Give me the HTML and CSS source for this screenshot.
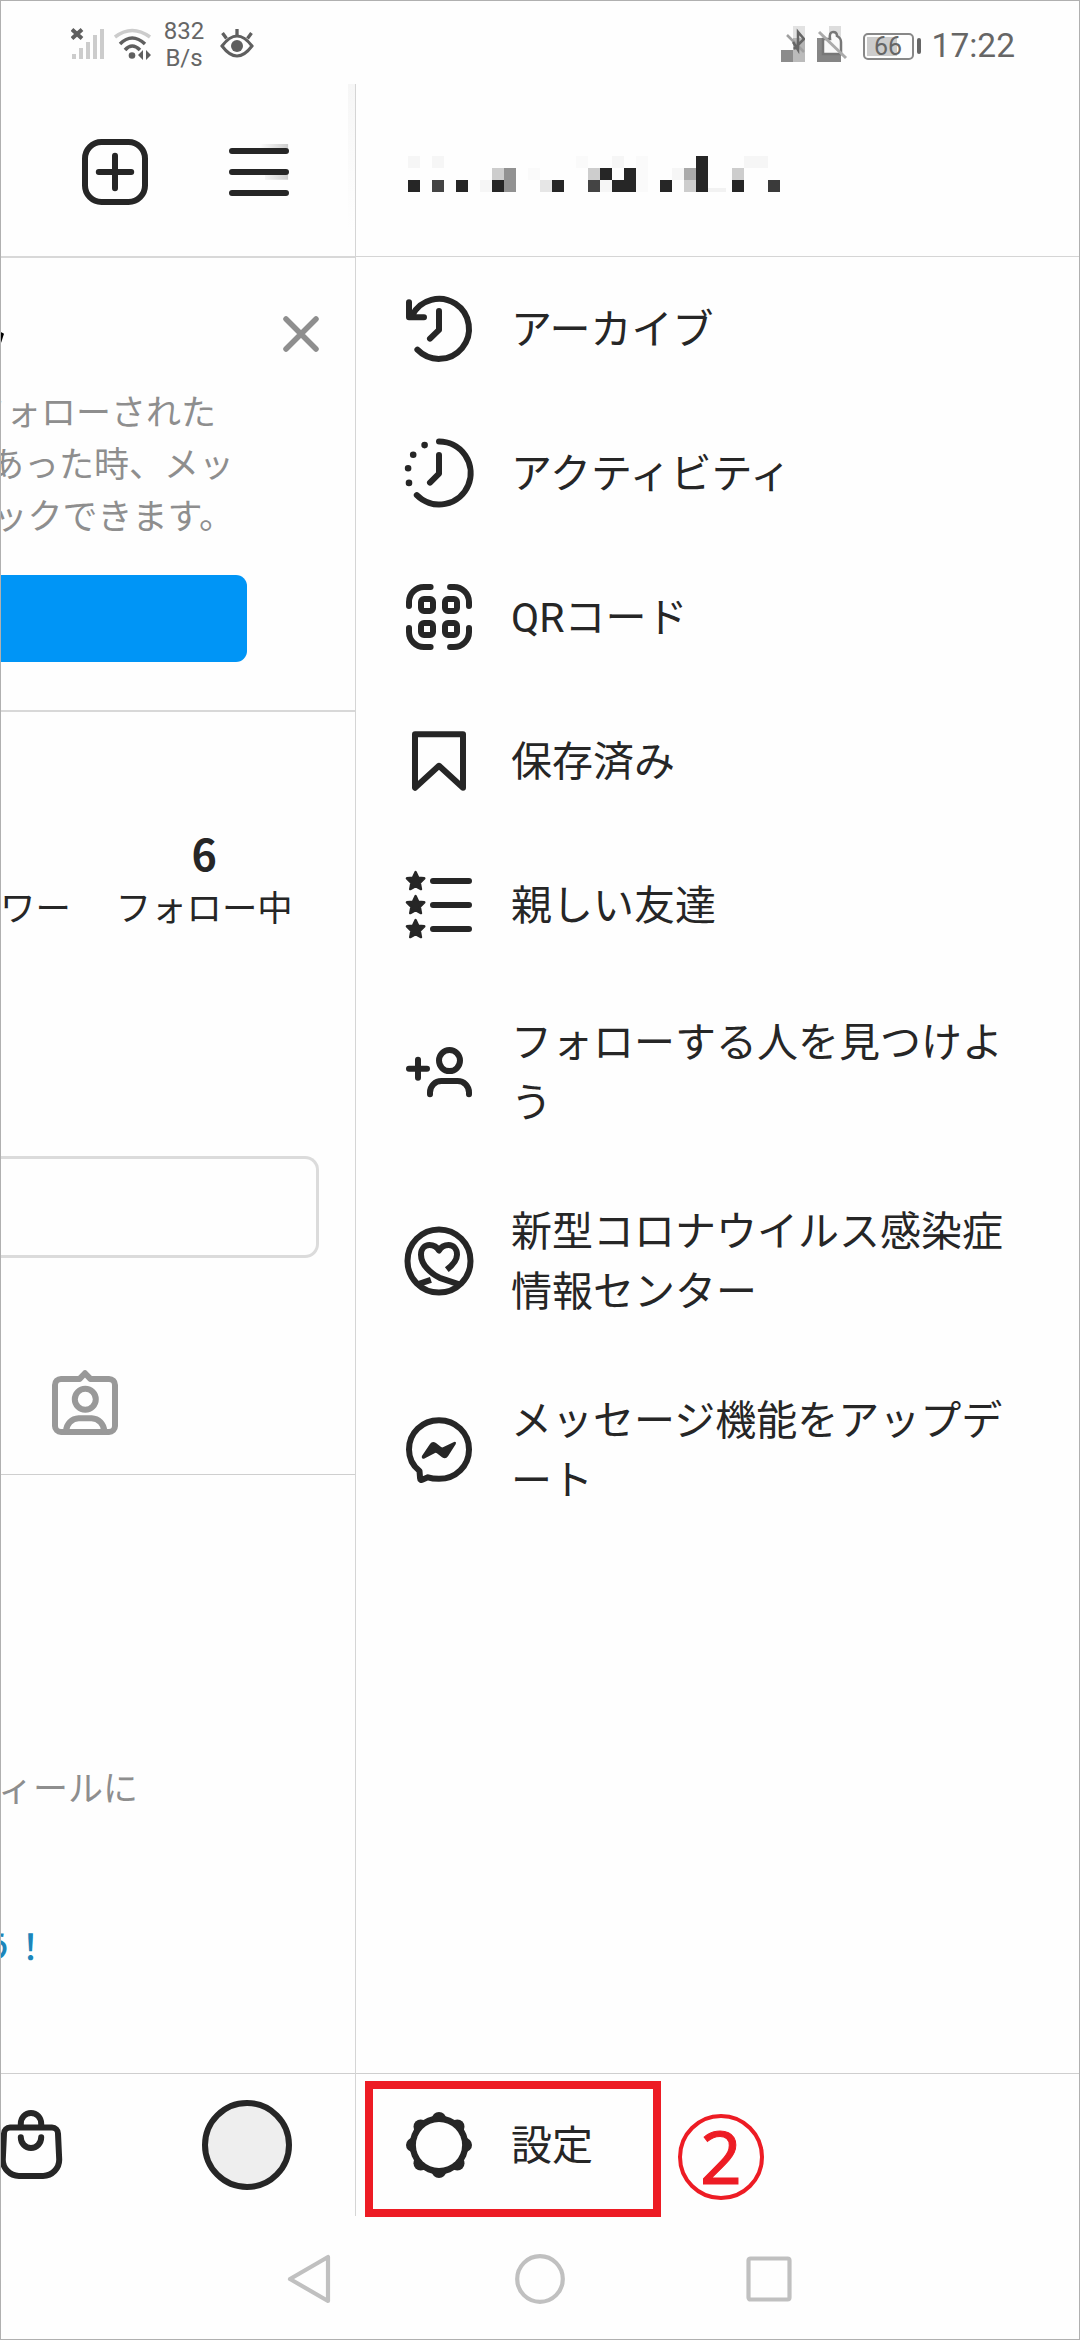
FILE: index.html
```html
<!DOCTYPE html>
<html lang="ja">
<head>
    <meta charset="UTF-8">
    <meta name="viewport" content="width=device-width, initial-scale=1.0">
    <title>メニュー</title>
    <link rel="stylesheet" href="styles.css">
</head>
<body>
<div class="screen">

    <!-- ステータスバー -->
    <div class="status">
        <svg class="signal" viewBox="0 0 34 32" width="34" height="32">
            <path d="M3 26v5M10 20v11M17 14v17M24 7v24M31 1v30" stroke="#ccc" stroke-width="4" fill="none"/>
            <path d="M1 1.500l10 9M11 1.500l-10 9" stroke="#5f5f5f" stroke-width="4" fill="none"/>
        </svg>
        <svg class="wifi" viewBox="0 0 38 32" width="38" height="32">
            <g fill="none" stroke-width="3.5">
                <path d="M1 9Q18 -4 36 9" stroke="#ccc"/>
                <path d="M6 16Q18 4 31 16M11 22Q18 14 26 22" stroke="#5f5f5f"/>
            </g>
            <circle cx="18" cy="27.500" r="3.300" fill="#5f5f5f"/>
            <path d="M29 22v10l-5-5zM32 22v10l5-5z" fill="#5f5f5f"/>
        </svg>
        <div class="speed">832<br>B/s</div>
        <svg class="eye" viewBox="0 0 34 32" width="34" height="32">
            <path d="M2 18Q17 -2 32 18Q17 38 2 18z" fill="none" stroke="#5f5f5f" stroke-width="3"/>
            <circle cx="17" cy="18" r="6" fill="#5f5f5f"/>
            <path d="M17 1v7M2.500 5l4 5.500M31.500 5l-4 5.500" stroke="#5f5f5f" stroke-width="3.300"/>
        </svg>
        <div class="status-right">
            <svg viewBox="0 0 24 36" width="24" height="36">
                <path d="M12 0h12v12H12z" fill="#e2e2e2"/>
                <path d="M12 12h12v12H12z" fill="#b5b5b5"/>
                <path d="M0 24h12v12H0z" fill="#8c8c8c"/>
                <path d="M12 24h12v12H12z" fill="#bbb"/>
                <path d="M6 9l17 17" stroke="#a0a0a0" stroke-width="2.500"/>
                <path d="M13 23l10-10-6-7v18l-5-8" fill="none" stroke="#666" stroke-width="2.500"/>
            </svg>
            <svg class="bell" viewBox="0 0 32 36" width="32" height="36">
                <path d="M0 12h7v24H0z" fill="#8a8a8a"/>
                <path d="M12 0h12v12H12z" fill="#ddd"/>
                <path d="M0 24h24v12H0z" fill="#858585"/>
                <path d="M6 28V13h7q-1-7 3-7 4 0 4 4 4 2 4 6v12z" fill="#fafafa" stroke="#777" stroke-width="2.500"/>
                <path d="M2 6l27 26" stroke="#aaa" stroke-width="3"/>
            </svg>
            <div class="battery"><span>66</span></div>
            <div class="clock">17:22</div>
        </div>
    </div>

    <div class="main">

        <!-- 左にずれたプロフィール画面 -->
        <div class="profile">
            <div class="topbar">
                <svg class="icon" viewBox="0 0 24 24">
                    <rect x="2" y="2" width="20" height="20" rx="5.500"/>
                    <path d="M12 6.600v10.800M6.600 12h10.800"/>
                </svg>
                <svg class="icon" viewBox="0 0 24 24">
                    <defs>
                        <linearGradient id="fade">
                            <stop offset="0" stop-color="#fff"/>
                            <stop offset="1" stop-color="#ccc"/>
                        </linearGradient>
                    </defs>
                    <path class="nostroke" d="M12 2.700h9.700v2.300H12zM14 12h7.700v2.600H14z" fill="url(#fade)"/>
                    <path d="M3 5h18M3 12h18M3 19h18"/>
                </svg>
            </div>

            <div class="banner">
                <div class="banner-title">
                    <i class="title-end"></i>
                    <svg class="close" viewBox="0 0 36 36" width="36" height="36">
                        <path d="M3 3l30 30M33 3L3 33"/>
                    </svg>
                </div>
                <div class="banner-text">
                    <p class="short">フォローされた</p>
                    <p>あった時、メッ</p>
                    <p>ックできます。</p>
                </div>
                <div class="banner-btn"></div>
            </div>

            <div class="stats">
                <div class="stat"><b>&nbsp;</b><span>ワー</span></div>
                <div class="stat"><b>6</b><span>フォロー中</span></div>
            </div>
            <div class="edit-btn"></div>

            <div class="tabs">
                <svg class="icon gray" viewBox="0 0 24 24">
                    <path d="M10.200 4.300H4a2 2 0 0 0-2 2V20a2 2 0 0 0 2 2h16a2 2 0 0 0 2-2V6.300a2 2 0 0 0-2-2h-6.200L12 2.400z"/>
                    <circle cx="12.100" cy="11.100" r="3.500"/>
                    <path d="M5.700 21.700a4.400 4.400 0 0 1 4.200-4.300h4.300a4.400 4.400 0 0 1 4.200 4.300"/>
                </svg>
            </div>

            <div class="feed">
                <p>ィールに</p>
                <p class="link">う！</p>
            </div>

            <div class="tabbar">
                <svg class="icon" viewBox="0 0 24 24">
                    <path d="M5 6.200h14a2 2 0 0 1 2 2l.4 8.500a5.400 5.400 0 0 1-5.400 5.600H8a5.400 5.400 0 0 1-5.400-5.600L3 8.200a2 2 0 0 1 2-2z"/>
                    <path d="M8.600 6V4.900a3.400 3.600 0 0 1 6.800 0V6M8.600 9.400a3.400 3.600 0 0 0 6.800 0"/>
                </svg>
                <div class="avatar"></div>
            </div>
        </div>

        <!-- ドロワーメニュー -->
        <div class="drawer">
            <div class="drawer-head">
                <!-- モザイクのユーザー名 -->
                <svg class="username" viewBox="0 0 372 36" width="372" height="36">
                    <path fill="#f6f6f6" d="M0 0h12v12H0zM24 0h12v12H24zM204 0h12v12h-12zM336 0h24v12h-24zM72 24h12v12H72zM192 24h12v12h-12zM264 12h12v12h-12z"/>
                    <path fill="#fafafa" d="M168 0h12v12h-12zM228 0h12v36h-12zM120 12h12v12h-12z"/>
                    <path fill="#e6e6e6" d="M132 24h12v12h-12z"/>
                    <path fill="#f2f2f2" d="M300 32h18v4h-18z"/>
                    <path fill="#cdcdcd" d="M84 12h12v12H84zM180 12h12v12h-12zM324 12h12v12h-12zM276 24h12v12h-12z"/>
                    <path fill="#aaa" d="M276 12h12v12h-12z"/>
                    <path fill="#929292" d="M96 12h12v24H96z"/>
                    <rect x="24" y="24" width="12" height="12" fill="#444"/>
                    <rect x="180" y="24" width="12" height="12" fill="#444"/>
                    <rect x="360" y="24" width="12" height="12" fill="#3a3a3a"/>
                    <g fill="#262626">
                        <rect x="0" y="24" width="12" height="12"/>
                        <rect x="48" y="24" width="12" height="12"/>
                        <rect x="84" y="24" width="12" height="12"/>
                        <rect x="144" y="24" width="12" height="12"/>
                        <rect x="192" y="12" width="12" height="12"/>
                        <rect x="204" y="24" width="12" height="12"/>
                        <rect x="216" y="12" width="12" height="24"/>
                        <rect x="252" y="24" width="12" height="12"/>
                        <rect x="288" y="0" width="12" height="36"/>
                        <rect x="324" y="24" width="12" height="12"/>
                    </g>
                </svg>
            </div>

            <ul class="menu">
                <li>
                    <svg class="icon" viewBox="0 0 24 24">
                        <path d="M4.800 18.900A10 10 0 1 0 3.100 7.400M2 3.100v5h5M12 6v6.300L9 15.200"/>
                    </svg>
                    <span>アーカイブ</span>
                </li>
                <li>
                    <svg class="icon" viewBox="0 0 24 24">
                        <path d="M12 1.500A10.500 10.500 0 1 1 4.600 19.400M12 6v6.200L9 15.200"/>
                        <path class="fill" d="M6.100 2.700a1.100 1.100 0 1 0 2.200 0a1.100 1.100 0 1 0-2.200 0M2.300 5.900a1.100 1.100 0 1 0 2.200 0a1.100 1.100 0 1 0-2.200 0M.6 10.400a1.100 1.100 0 1 0 2.200 0a1.100 1.100 0 1 0-2.200 0M.9 15.300a1.100 1.100 0 1 0 2.200 0a1.100 1.100 0 1 0-2.200 0"/>
                    </svg>
                    <span>アクティビティ</span>
                </li>
                <li>
                    <svg class="icon" viewBox="0 0 24 24">
                        <path d="M9.200 2H7a5 5 0 0 0-5 5v1.300M15.700 2H17a5 5 0 0 1 5 5v1.300M2 15.700V17a5 5 0 0 0 5 5h2.200M22 15.700V17a5 5 0 0 1-5 5h-1.300"/>
                        <rect x="6" y="6" width="4" height="4" rx="1"/>
                        <rect x="14" y="6" width="4" height="4" rx="1"/>
                        <rect x="6" y="14" width="4" height="4" rx="1"/>
                        <rect x="14" y="14" width="4" height="4" rx="1"/>
                    </svg>
                    <span>QRコード</span>
                </li>
                <li>
                    <svg class="icon" viewBox="0 0 24 24">
                        <path d="M20 20.900l-8-7.300-8 7.300V3.100h16z"/>
                    </svg>
                    <span>保存済み</span>
                </li>
                <li>
                    <svg class="icon" viewBox="0 0 24 24">
                        <path d="M10 4h12M10 12h12M10 20h12"/>
                        <g class="star">
                            <path d="M4.200 1l.9 1.900 2 .2-1.500 1.500.4 2.100-1.800-1-1.800 1 .4-2.100-1.500-1.500 2-.2z"/>
                            <path d="M4.200 9l.9 1.900 2 .2-1.500 1.500.4 2.100-1.800-1-1.800 1 .4-2.100-1.500-1.500 2-.2z"/>
                            <path d="M4.200 17l.9 1.900 2 .2-1.500 1.500.4 2.100-1.800-1-1.800 1 .4-2.100-1.500-1.500 2-.2z"/>
                        </g>
                    </svg>
                    <span>親しい友達</span>
                </li>
                <li class="two">
                    <svg class="icon" viewBox="0 0 24 24">
                        <circle cx="15.500" cy="8.200" r="3.500"/>
                        <path d="M2 10.900h6M5 7.900v6M9 19.400v-.6A3.800 3.800 0 0 1 12.800 15h5.400a3.800 3.800 0 0 1 3.800 3.800v.6"/>
                    </svg>
                    <span>フォローする人を見つけよう</span>
                </li>
                <li class="two">
                    <svg class="icon" viewBox="0 0 24 24">
                        <circle cx="12" cy="12" r="10.500"/>
                        <path class="butt" d="M14.600 14.900C17 13 18 11.500 18 9.900C18 8 16.800 6.700 15.200 6.700C13.800 6.700 12.700 7.300 12 8.500C11.300 7.300 10.200 6.700 8.800 6.700C7.200 6.700 6 8 6 9.900C6 13.300 9.400 16.300 12.200 17.600L19 19.900M4.600 19.900L9.300 18.300"/>
                    </svg>
                    <span>新型コロナウイルス感染症情報センター</span>
                </li>
                <li class="two">
                    <svg class="icon" viewBox="0 0 24 24">
                        <path d="M12 2.100C6.400 2.100 2 6.300 2 11.800c0 2.900 1.300 5.400 3.500 7.200l.2 2.500c0 .4.400.6.700.4l1.900-.8c1.200.4 2.400.5 3.700.5 5.600 0 10-4.300 10-9.800S17.600 2.100 12 2.100z"/>
                        <path class="fill" d="M6.300 14L9 10Q9.800 8.900 11 9.700L12.700 11Q13.100 11.300 13.500 11L17 9.300Q17.900 9.100 17.600 10L15 14.100Q14.200 15.300 13 14.400L11.300 13.100Q10.900 12.800 10.500 13.100L7 14.900Q6.100 15.100 6.300 14z"/>
                    </svg>
                    <span>メッセージ機能をアップデート</span>
                </li>
            </ul>

            <div class="settings">
                <svg class="icon" viewBox="0 0 24 24">
                    <g class="fill">
                        <circle cx="12" cy="12" r="9.800"/>
                        <circle cx="12" cy="3.400" r="2.400"/>
                        <circle cx="18.100" cy="5.900" r="2.400"/>
                        <circle cx="20.600" cy="12" r="2.400"/>
                        <circle cx="18.100" cy="18.100" r="2.400"/>
                        <circle cx="12" cy="20.600" r="2.400"/>
                        <circle cx="5.900" cy="18.100" r="2.400"/>
                        <circle cx="3.400" cy="12" r="2.400"/>
                        <circle cx="5.900" cy="5.900" r="2.400"/>
                    </g>
                    <circle class="hole" cx="12" cy="12" r="7.700"/>
                </svg>
                <span>設定</span>
                <div class="mark-box"></div>
                <div class="mark-num">2</div>
            </div>
        </div>
    </div>

    <!-- ナビゲーションバー -->
    <div class="navbar">
        <svg viewBox="0 0 50 50" width="50" height="50"><path d="M42 3v44L4 25z"/></svg>
        <svg viewBox="0 0 50 50" width="50" height="50"><circle cx="25" cy="25" r="22.800"/></svg>
        <svg viewBox="0 0 50 50" width="50" height="50"><rect x="4.500" y="4.500" width="41" height="41" rx="2"/></svg>
    </div>
</div>
</body>
</html>
```

FILE: styles.css
```css
/*初期化*/
body,ul,li,p{
    margin: 0;
    padding: 0;
}
ul{
    list-style: none;
}

/*画面全体*/
.screen{
    width: 1080px;
    height: 2340px;
    position: relative;
    display: flex;
    flex-direction: column;
    overflow: hidden;
    background: #fefefe;
    color: #262626;
    font-family: Roboto, "Noto Sans CJK JP", sans-serif;
}
.screen::after{
    content: "";
    position: absolute;
    inset: 0;
    border: 1px solid #b0b0b0;
}

/*アイコン共通*/
.icon{
    width: 72px;
    height: 72px;
    flex: none;
    fill: none;
    stroke: #262626;
    stroke-width: 2;
    stroke-linecap: round;
    stroke-linejoin: round;
}
.icon .fill{
    fill: #262626;
    stroke: none;
}
.icon .nostroke{
    stroke: none;
}
.icon .star{
    fill: #262626;
    stroke-width: 0.8;
}
.icon .butt{
    stroke-linecap: butt;
}
.icon .hole{
    fill: #fefefe;
    stroke: none;
}
.gray{
    stroke: #999;
}

/*ステータスバー*/
.status{
    height: 84px;
    flex: none;
    display: flex;
    align-items: center;
    padding: 4px 66px 0 71px;
    box-sizing: border-box;
    color: #666;
}
.wifi{
    margin-left: 9px;
}
.speed{
    width: 44px;
    margin-left: 10px;
    padding-top: 2px;
    font-size: 24px;
    line-height: 27px;
    text-align: center;
}
.eye{
    margin-left: 14px;
}
.status-right{
    margin-left: auto;
    display: flex;
    align-items: center;
}
.bell{
    margin-left: 12px;
}
.battery{
    width: 51px;
    height: 27px;
    box-sizing: border-box;
    margin: 4px 18px 0 14px;
    border: 2px solid #888;
    border-radius: 5px;
    background: linear-gradient(#ccc, #ccc) 2px 2px / 30px 19px no-repeat;
    font-size: 25px;
    line-height: 24px;
    text-align: center;
    position: relative;
}
/*電池の端子*/
.battery::after{
    content: "";
    position: absolute;
    right: -9px;
    top: 3px;
    width: 4px;
    height: 16px;
    border-radius: 2px;
    background: #666;
}
.clock{
    font-size: 33.5px;
    line-height: 40px;
    padding-top: 3px;
    margin-right: -1px;
}

.main{
    height: 2132px;
    flex: none;
    display: flex;
}

/*プロフィール側*/
.profile{
    width: 355px;
    flex: none;
    overflow: hidden;
    display: flex;
    flex-direction: column;
}
.topbar{
    height: 174px;
    box-sizing: border-box;
    border-bottom: 2px solid #d8d8d8;
    display: flex;
    align-items: center;
    gap: 72px;
    padding: 4px 0 0 79px;
    background: linear-gradient(#f6f6f6, #fefefe) 348px 0 / 7px 146px no-repeat;
}
.banner{
    height: 454px;
    box-sizing: border-box;
    border-bottom: 2px solid #d8d8d8;
    padding-top: 58px;
}
.banner-title{
    height: 36px;
    display: flex;
    justify-content: space-between;
    align-items: center;
    padding-right: 36px;
}
.title-end{
    width: 4px;
    height: 11px;
    background: #000;
    clip-path: polygon(0 0, 100% 20%, 30% 100%, 0 100%);
    margin-top: 6px;
}
.close{
    fill: none;
    stroke: #8e8e8e;
    stroke-width: 5.5;
    stroke-linecap: round;
}
.banner-text{
    display: flex;
    flex-direction: column;
    align-items: flex-end;
    margin-top: 36px;
    padding-right: 121px;
    color: #8e8e8e;
    font-size: 35px;
    line-height: 52px;
    white-space: nowrap;
}
.banner-text .short{
    margin-right: 18px;
}
.banner-btn{
    width: 247px;
    height: 87px;
    margin-top: 31px;
    border-radius: 0 11px 11px 0;
    background: #0095f6;
}
.stats{
    height: 444px;
    box-sizing: border-box;
    padding-top: 114px;
    display: flex;
    gap: 45px;
}
.stat{
    display: flex;
    flex-direction: column;
    align-items: center;
    white-space: nowrap;
}
.stat b{
    font-family: "Noto Sans CJK JP", sans-serif;
    font-size: 43px;
    line-height: 52px;
}
.stat span{
    font-size: 35.4px;
    line-height: 52px;
    margin-top: 5px;
}
.edit-btn{
    width: 319px;
    height: 102px;
    box-sizing: border-box;
    border: 3px solid #dbdbdb;
    border-left: none;
    border-radius: 0 14px 14px 0;
}
.tabs{
    height: 217px;
    box-sizing: border-box;
    border-bottom: 1px solid #cfcfcf;
    padding: 108px 0 0 49px;
}
.feed{
    width: 138px;
    height: 598px;
    box-sizing: border-box;
    padding-top: 289px;
    display: flex;
    flex-direction: column;
    align-items: flex-end;
    color: #8e8e8e;
    font-size: 35px;
    line-height: 52px;
    white-space: nowrap;
}
.feed .link{
    margin: 107px 90px 0 0;
    color: #1b86bb;
    font-weight: 500;
}
.tabbar{
    height: 143px;
    box-sizing: border-box;
    border-top: 1px solid #cfcfcf;
    display: flex;
    align-items: center;
    gap: 135px;
    margin-left: -5px;
}
.avatar{
    width: 90px;
    height: 90px;
    box-sizing: border-box;
    border: 6px solid #262626;
    border-radius: 50%;
    background: #eee;
}

/*ドロワー側*/
.drawer{
    flex: 1;
    box-sizing: border-box;
    border-left: 1px solid #d5d5d5;
    display: flex;
    flex-direction: column;
}
.drawer-head{
    height: 173px;
    box-sizing: border-box;
    border-bottom: 1px solid #d5d5d5;
    padding: 72px 0 0 52px;
}
.username{
    display: block;
}
.menu{
    flex: 1;
}
.menu li,.settings{
    height: 144px;
    display: flex;
    align-items: center;
    gap: 36px;
    padding: 0 40px 0 47px;
    font-size: 41px;
    line-height: 60.5px;
}
.menu .two{
    height: 189px;
}
.menu li span,.settings span{
    padding-top: 3px;
}
.menu li span{
    width: 500px;
    line-break: anywhere;
}
.settings{
    height: 143px;
    box-sizing: border-box;
    border-top: 1px solid #cfcfcf;
    position: relative;
}

/*赤枠と番号*/
.mark-box{
    position: absolute;
    left: 9px;
    top: 7px;
    width: 296px;
    height: 136px;
    box-sizing: border-box;
    border: 8px solid #ed1c24;
}
.mark-num{
    position: absolute;
    left: 322px;
    top: 40px;
    width: 86px;
    height: 86px;
    box-sizing: border-box;
    border: 4px solid #ed1c24;
    border-radius: 50%;
    color: #ed1c24;
    font-family: "Noto Sans", sans-serif;
    font-size: 73px;
    line-height: 76px;
    text-align: center;
    -webkit-text-stroke: 1px #ed1c24;
}

/*ナビゲーションバー*/
.navbar{
    flex: 1;
    display: flex;
    justify-content: center;
    align-items: center;
    gap: 179px;
    padding-top: 1px;
}
.navbar svg{
    fill: none;
    stroke: #c0c0c0;
    stroke-width: 4.2;
    stroke-linejoin: round;
}
```
